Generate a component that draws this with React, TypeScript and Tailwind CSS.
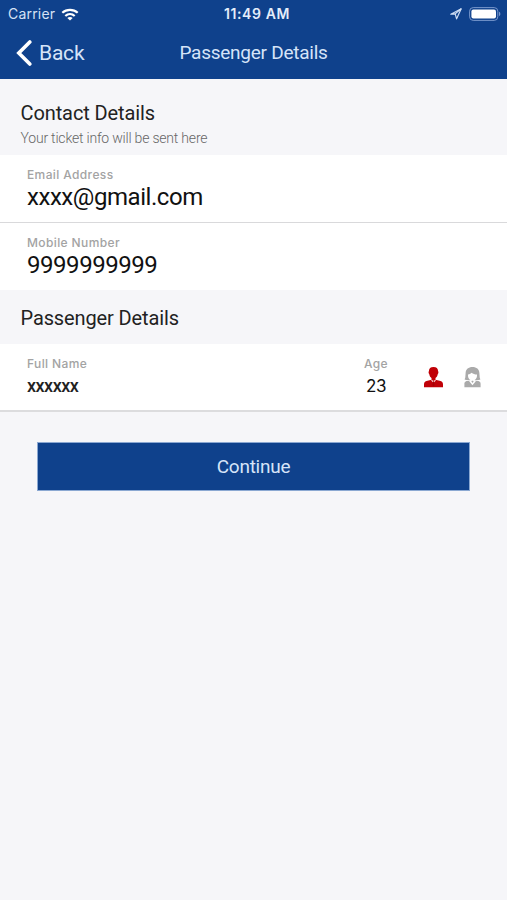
import type { ReactNode } from "react";

function StatusBar() {
  return (
    <div className="grid h-7 grid-cols-3 items-center pl-[8px] pr-[6px] font-['Inter',sans-serif] leading-7">
      <div className="flex items-center gap-[6px]">
        <span className="text-[14px] tracking-[0.2px] text-[#d6e2f5]">Carrier</span>
        <svg className="h-[13px] w-[18px]" viewBox="0 0 18 13" fill="none" stroke="white" strokeWidth="2.2">
          <path d="M1.3 4.8C5.6.9 12.400.9 16.700 4.800" />
          <path d="M4.300 8c2.700-2.500 6.700-2.500 9.400 0" />
          <path d="M9 12.600 6.300 10c1.500-1.500 3.900-1.500 5.400 0Z" fill="white" stroke="none" />
        </svg>
      </div>
      <span className="whitespace-nowrap pl-[5px] text-center text-[14px] font-semibold tracking-[0.6px] text-[#e4edfa]">
        11:49 AM
      </span>
      <div className="flex items-center justify-end gap-[7px]">
        <svg className="h-[12px] w-[12px]" viewBox="0 0 12 12" fill="none" stroke="#cfdef4" strokeWidth="1.2" strokeLinejoin="round">
          <path d="M11.200.8.8 6.200l4.400-.4 1.400 5Z" />
          <path d="m5.200 5.800 6-5" />
        </svg>
        <svg className="h-[14px] w-[32px]" viewBox="0 0 32 14">
          <rect x="0.6" y="0.6" width="28.2" height="12.8" rx="3.6" fill="none" stroke="#7897cc" />
          <rect x="2.4" y="2.4" width="24.6" height="9.2" rx="2" fill="white" />
          <path d="M30 4.800c1.800.6 1.800 3.800 0 4.400Z" fill="#7897cc" />
        </svg>
      </div>
    </div>
  );
}

function Label({ children }: { children: ReactNode }) {
  return (
    <span className="block whitespace-nowrap font-['Inter',sans-serif] text-[12px] font-medium leading-4 tracking-[0.38px] text-[#a3a3a3]">
      {children}
    </span>
  );
}

function Field({ label, value }: { label: string; value: string }) {
  return (
    <div className="h-[67px] bg-white pl-[27px] pt-[12px]">
      <Label>{label}</Label>
      <span className="block text-[24px] leading-[29px] tracking-[-0.45px] text-[#111]">{value}</span>
    </div>
  );
}

function MaleIcon() {
  return (
    <svg className="h-[21px] w-[19px]" viewBox="0 0 19 21" fill="#c00007">
      <path d="M9.500 0C6.400 0 4.900 1.500 4.900 4.200c-.6.500-.3 2.500.3 2.900.3 1.900 1.100 3.100 2.300 4V12.700L2.500 14C.7 14.500 0 15.700 0 17.500v2.800h19v-2.800c0-1.800-.7-3-2.500-3.500l-5-1.300v-1.600c1.200-.9 2-2.100 2.300-4 .6-.4.900-2.400.3-2.900C14.100 1.500 12.600 0 9.500 0Z" />
      <path d="m7.500 12.400 2 1.500 2-1.500.4.900-1.500 2-.9-.7-.9.700-1.500-2Z" fill="#f3c9cb" />
      <path d="m9 14.600-.6 3.400 1.100 1.400 1.100-1.400-.6-3.400Z" fill="#a50006" />
    </svg>
  );
}

function FemaleIcon() {
  return (
    <svg className="h-[21px] w-[17px]" viewBox="0 0 17 21" fill="#aaa">
      <path d="M8.500 0C4.500 0 1.700 2.200 1.600 6.300L1.300 10.500.6 12.600c1.600.7 3.400.7 5 .4h5.800c1.600.3 3.400.3 5-.4l-.7-2.100-.3-4.200C15.300 2.200 12.500 0 8.500 0Z" />
      <path d="M.4 20.300v-3.500c0-1.700 1.200-2.700 3.700-3h8.800c2.500.3 3.700 1.300 3.700 3v3.500Z" />
      <path d="M4 7.400c1.700-.2 3-.9 3.600-1.700 1.400 1.200 3.200 1.700 5.400 1.900v.8c0 2.800-1.700 5-4.500 5S4 11.200 4 8.400Z" fill="white" />
      <path d="m5.200 14.300 3.300 3.900 3.300-3.900-1.600-1.300H6.800Z" fill="white" />
      <path d="m7.400 14.400 1.100 1.700 1.100-1.700-.4-.7H7.800Z" />
      <path d="M1 13.500h3.700M12.300 13.500H16" stroke="white" strokeWidth=".6" />
    </svg>
  );
}

export default function App() {
  return (
    <div className="min-h-screen bg-[#f6f6f9] font-['Roboto',sans-serif]">
      <header className="h-[79px] bg-[#0f418c]">
        <StatusBar />
        <div className="grid h-[50px] grid-cols-[100px_1fr_100px] items-center">
          <button className="flex items-center gap-[7px] pl-[16px] text-[#d6e4f8]">
            <svg className="h-[26px] w-[16px]" viewBox="0 0 16 26" fill="none" stroke="white" strokeWidth="3.6" strokeLinecap="round">
              <path d="M13.800 2 2.800 13l11 11" />
            </svg>
            <span className="text-[21px] leading-6 tracking-[-0.2px]">Back</span>
          </button>
          <h1 className="text-center text-[19px] leading-6 tracking-[-0.25px] text-[#d6e4f8]">Passenger Details</h1>
        </div>
      </header>

      <main>
        <div className="h-[76px] pl-[20.5px] pt-[22px]">
          <h2 className="text-[20px] leading-6 tracking-[-0.1px] text-[#222]">Contact Details</h2>
          <p className="pt-[4px] text-[14px] font-light leading-[18px] tracking-[-0.2px] text-[#666]">
            Your ticket info will be sent here
          </p>
        </div>
        <Field label="Email Address" value="xxxx@gmail.com" />
        <div className="h-px bg-[#d9d9db]" />
        <Field label="Mobile Number" value="9999999999" />

        <div className="h-[54px] pl-[20.5px] pt-[16px]">
          <h2 className="text-[20px] leading-6 tracking-[-0.12px] text-[#222]">Passenger Details</h2>
        </div>
        <div className="flex h-[68px] border-b-2 border-[#dcdcde] bg-white pl-[27px] pt-[12px]">
          <div className="w-[319px]">
            <Label>Full Name</Label>
            <span className="block pt-[2px] text-[18px] font-medium leading-6 tracking-[-0.5px] text-[#222]">xxxxxx</span>
          </div>
          <div className="w-[60px] text-center">
            <Label>Age</Label>
            <span className="block pt-[2px] font-['Inter',sans-serif] text-[17px] leading-6 tracking-[-0.5px] text-[#111]">23</span>
          </div>
          <div className="flex items-start gap-[21px] pl-[18px] pt-[11px]">
            <MaleIcon />
            <FemaleIcon />
          </div>
        </div>

        <div className="px-[37px] pt-[30px]">
          <button className="h-[49px] w-full border border-[#8ba8d2] bg-[#0f418c] pt-[2px] text-[19px] tracking-[-0.25px] text-[#d6e4f8]">
            Continue
          </button>
        </div>
      </main>
    </div>
  );
}
